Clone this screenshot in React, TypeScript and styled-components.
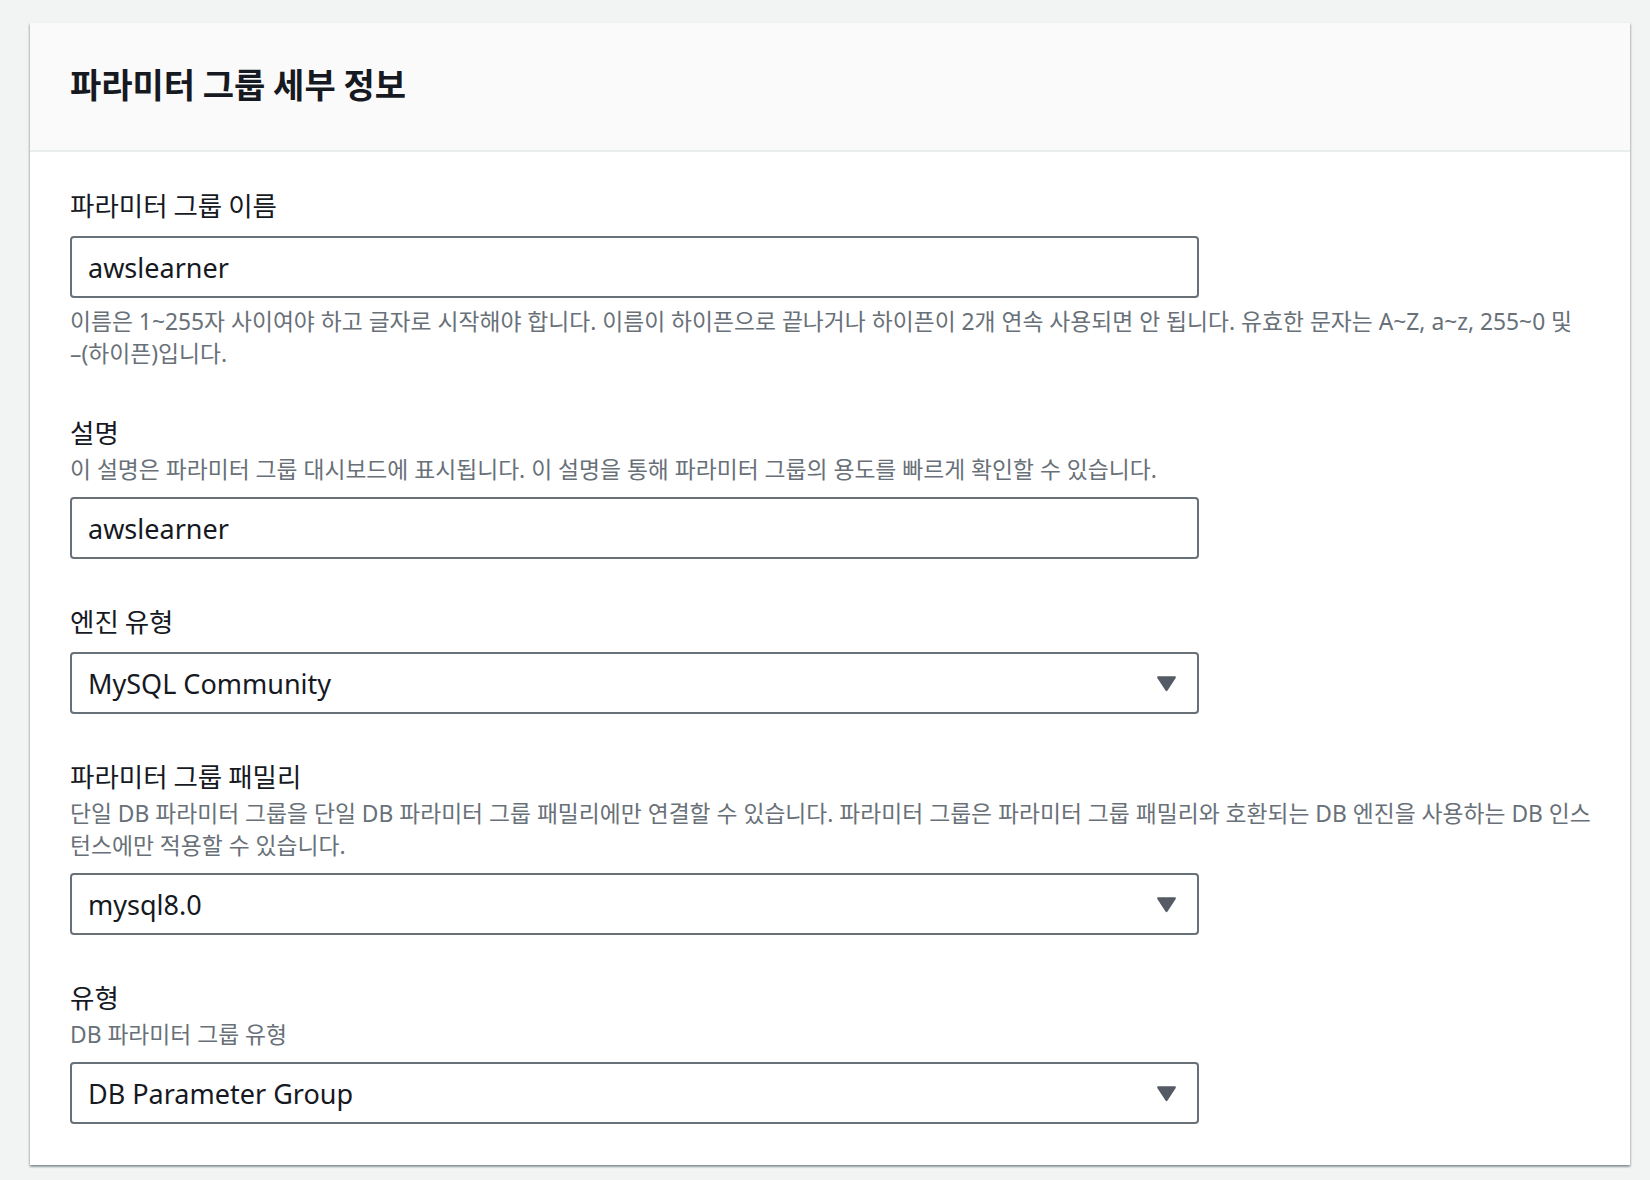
import React from "react";
import styled, { createGlobalStyle } from "styled-components";

const GlobalStyle = createGlobalStyle`
  html, body {
    margin: 0;
    padding: 0;
    background: #f2f3f3;
  }
  body {
    font-family: "Noto Sans", "Noto Sans CJK KR", sans-serif;
    color: #16191f;
  }
`;

const Page = styled.div`
  min-height: 1180px;
  padding: 23px 20px 16px 30px;
  box-sizing: border-box;
`;

const Card = styled.section`
  background: #ffffff;
  box-shadow: 0 2px 2px 0 rgba(0, 28, 36, 0.3),
    1px 1px 2px 0 rgba(0, 28, 36, 0.15), -1px 1px 2px 0 rgba(0, 28, 36, 0.15);
`;

const Header = styled.header`
  background: #fafafa;
  padding: 39px 40px 44px;
  border-bottom: 2px solid #eaeded;
`;

const Title = styled.h2`
  margin: 0;
  font-family: "Noto Sans CJK KR", sans-serif;
  font-size: 34px;
  line-height: 44px;
  font-weight: 700;
  color: #16191f;
`;

const Body = styled.div`
  padding: 35px 24px 41px 40px;
  display: flex;
  flex-direction: column;
  gap: 44px;
`;

const Field = styled.div`
  display: flex;
  flex-direction: column;
`;

const FieldHead = styled.div<{ $described: boolean }>`
  display: flex;
  flex-direction: column;
  margin-bottom: ${(p) => (p.$described ? "11px" : "13px")};
`;

const Label = styled.label`
  font-family: "Noto Sans CJK KR", sans-serif;
  font-size: 26.5px;
  line-height: 36px;
  color: #16191f;
`;

const Description = styled.div`
  margin-top: 4px;
  font-size: 22.8px;
  line-height: 32px;
  color: #687078;
  white-space: nowrap;
`;

const Constraint = styled(Description)`
  margin-top: 8px;
`;

const Box = styled.div`
  width: 1129px;
  height: 62px;
  box-sizing: border-box;
  border: 2px solid #687078;
  border-radius: 4px;
  background: #ffffff;
  display: flex;
  align-items: center;
  padding: 0 20px 0 16px;
  font-size: 27px;
  color: #16191f;
`;

const Value = styled.span`
  flex: 1;
  white-space: nowrap;
`;

const Caret = () => (
  <svg width="21" height="17" viewBox="0 0 21 17" aria-hidden="true">
    <path
      d="M2.2 1.2 H18.8 Q20.6 1.2 19.7 2.9 L11.5 15.6 Q10.5 17 9.5 15.6 L1.3 2.9 Q0.4 1.2 2.2 1.2 Z"
      fill="#545b64"
    />
  </svg>
);

interface IFieldProps {
  label: string;
  description?: React.ReactNode;
  constraint?: React.ReactNode;
  value: string;
  select?: boolean;
}

const FormField = ({ label, description, constraint, value, select }: IFieldProps) => (
  <Field>
    <FieldHead $described={!!description}>
      <Label>{label}</Label>
      {description && <Description>{description}</Description>}
    </FieldHead>
    <Box>
      <Value>{value}</Value>
      {select && <Caret />}
    </Box>
    {constraint && <Constraint>{constraint}</Constraint>}
  </Field>
);

export default function App() {
  return (
    <Page>
      <GlobalStyle />
      <Card>
        <Header>
          <Title>파라미터 그룹 세부 정보</Title>
        </Header>
        <Body>
          <FormField
            label="파라미터 그룹 이름"
            value="awslearner"
            constraint={
              <>
                이름은 1~255자 사이여야 하고 글자로 시작해야 합니다. 이름이 하이픈으로 끝나거나
                하이픈이 2개 연속 사용되면 안 됩니다. 유효한 문자는 A~Z, a~z, 255~0 및
                <br />
                –(하이픈)입니다.
              </>
            }
          />
          <FormField
            label="설명"
            description="이 설명은 파라미터 그룹 대시보드에 표시됩니다. 이 설명을 통해 파라미터 그룹의 용도를 빠르게 확인할 수 있습니다."
            value="awslearner"
          />
          <FormField label="엔진 유형" value="MySQL Community" select />
          <FormField
            label="파라미터 그룹 패밀리"
            description={
              <>
                단일 DB 파라미터 그룹을 단일 DB 파라미터 그룹 패밀리에만 연결할 수 있습니다.
                파라미터 그룹은 파라미터 그룹 패밀리와 호환되는 DB 엔진을 사용하는 DB 인스
                <br />
                턴스에만 적용할 수 있습니다.
              </>
            }
            value="mysql8.0"
            select
          />
          <FormField
            label="유형"
            description="DB 파라미터 그룹 유형"
            value="DB Parameter Group"
            select
          />
        </Body>
      </Card>
    </Page>
  );
}
